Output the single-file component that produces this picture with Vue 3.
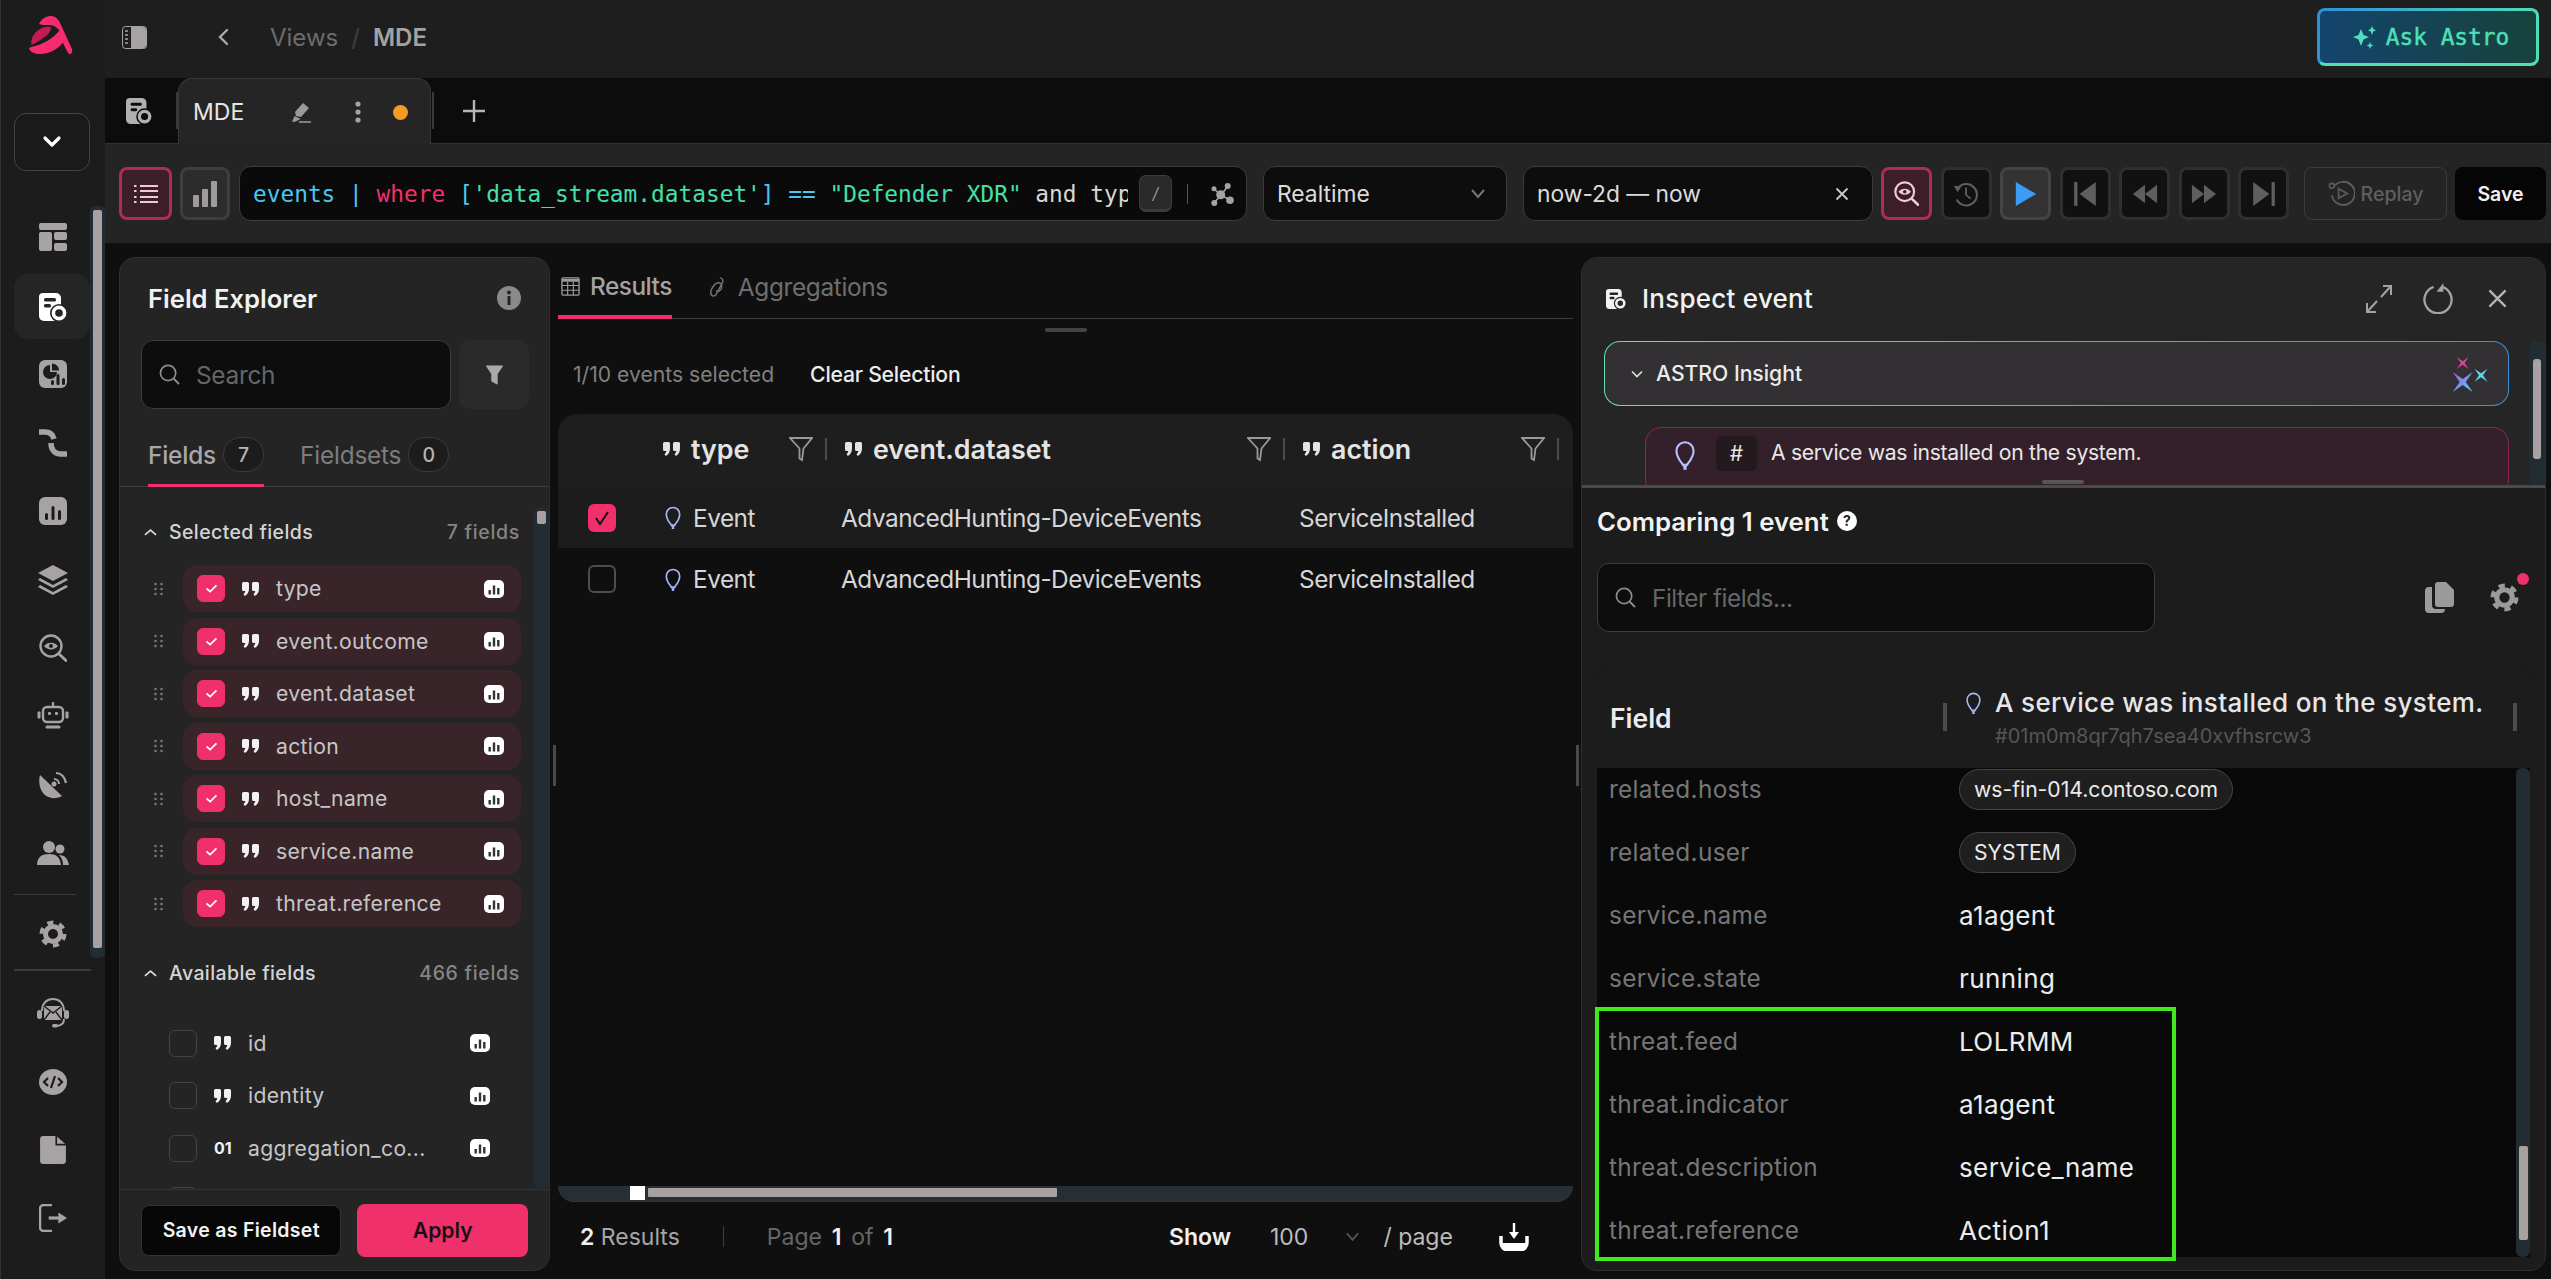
<script setup>
const navTop = [
  { id: 'n-layout' }, { id: 'n-doc', active: true }, { id: 'n-pie' }, { id: 'n-flow' }, { id: 'n-bars' },
  { id: 'n-layers', big: true }, { id: 'n-eye' }, { id: 'n-robot', big: true }, { id: 'n-dish' }, { id: 'n-users', big: true },
]
const navBottom = [
  { id: 'n-mail', big: true }, { id: 'n-code' }, { id: 'n-file' }, { id: 'n-logout' },
]
const selected = ['type', 'event.outcome', 'event.dataset', 'action', 'host_name', 'service.name', 'threat.reference']
const available = [
  { name: 'id', kind: 'q' }, { name: 'identity', kind: 'q' }, { name: 'aggregation_co...', kind: 'n' }, { name: '', kind: 'none' },
]
const columns = ['type', 'event.dataset', 'action']
const events = [
  { checked: true, dataset: 'AdvancedHunting-DeviceEvents', action: 'ServiceInstalled' },
  { checked: false, dataset: 'AdvancedHunting-DeviceEvents', action: 'ServiceInstalled' },
]
const playback = ['p-history', 'p-play', 'p-first', 'p-rew', 'p-ff', 'p-last']
const compare = [
  { f: 'related.hosts', v: 'ws-fin-014.contoso.com', tag: true },
  { f: 'related.user', v: 'SYSTEM', tag: true },
  { f: 'service.name', v: 'a1agent' },
  { f: 'service.state', v: 'running' },
  { f: 'threat.feed', v: 'LOLRMM' },
  { f: 'threat.indicator', v: 'a1agent' },
  { f: 'threat.description', v: 'service_name' },
  { f: 'threat.reference', v: 'Action1' },
]
</script>

<template>
  <div class="app">
    <svg class="defs" width="0" height="0" aria-hidden="true">
      <defs>
        <symbol id="n-layout" viewBox="0 0 28 28"><rect x="0" y="0" width="28" height="7" rx="2" fill="currentColor"/><rect x="0" y="9" width="13" height="19" rx="2" fill="currentColor"/><rect x="15" y="9" width="13" height="8" rx="2" fill="currentColor"/><rect x="15" y="20" width="13" height="8" rx="2" fill="currentColor"/></symbol>
        <symbol id="n-doc" viewBox="0 0 28 28"><path d="M4 0h13a5 5 0 0 1 5 5v23H5a5 5 0 0 1-5-5V4a4 4 0 0 1 4-4z" fill="currentColor"/><rect x="5" y="5" width="12" height="3.4" rx="1.5" fill="var(--cut)"/><rect x="5" y="11" width="7" height="3.4" rx="1.5" fill="var(--cut)"/><circle cx="20" cy="20" r="9" fill="var(--cut)"/><circle cx="20" cy="20" r="5.6" fill="none" stroke="currentColor" stroke-width="3.6"/></symbol>
        <symbol id="n-pie" viewBox="0 0 28 28"><rect width="28" height="28" rx="6" fill="currentColor"/><path d="M11 5a7 7 0 1 0 7 7h-7z" fill="var(--cut)"/><path d="M13 3.500a7 7 0 0 1 7 7h-7z" fill="var(--cut)"/><rect x="12" y="20" width="3" height="5" rx="1.500" fill="var(--cut)"/><rect x="17.500" y="14" width="3" height="11" rx="1.500" fill="var(--cut)"/><rect x="23" y="18" width="3" height="7" rx="1.500" fill="var(--cut)"/></symbol>
        <symbol id="n-flow" viewBox="0 0 28 28"><path d="M0 3h6c6 0 8 3 9 7" fill="none" stroke="currentColor" stroke-width="5.500"/><path d="M12 14c0 6 3 10.500 9 11h7" fill="none" stroke="currentColor" stroke-width="5.500"/></symbol>
        <symbol id="n-bars" viewBox="0 0 28 28"><rect width="28" height="28" rx="6" fill="currentColor"/><rect x="6" y="16" width="3" height="7" rx="1.500" fill="var(--cut)"/><rect x="12.500" y="9" width="3" height="14" rx="1.500" fill="var(--cut)"/><rect x="19" y="13" width="3" height="10" rx="1.500" fill="var(--cut)"/></symbol>
        <symbol id="n-layers" viewBox="0 0 32 32"><path d="M16 1l15 8-15 8-15-8z" fill="currentColor"/><path d="M3 14l13 7 13-7 2 2-15 8-15-8z" fill="currentColor"/><path d="M3 21l13 7 13-7 2 2-15 8-15-8z" fill="currentColor"/></symbol>
        <symbol id="n-eye" viewBox="0 0 28 28"><circle cx="12" cy="12" r="10.500" fill="none" stroke="currentColor" stroke-width="2.400"/><path d="M5 12c3.500-4.500 10.500-4.500 14 0-3.500 4.500-10.500 4.500-14 0z" fill="currentColor"/><circle cx="12" cy="12" r="2" fill="var(--cut)"/><path d="M20 20l7 6.500" stroke="currentColor" stroke-width="3" stroke-linecap="round"/></symbol>
        <symbol id="n-robot" viewBox="0 0 32 28"><path d="M16 0v5" stroke="currentColor" stroke-width="2.200"/><rect x="6" y="5" width="20" height="15" rx="4" fill="none" stroke="currentColor" stroke-width="2.400"/><rect x="11" y="10" width="3" height="3" rx="1" fill="currentColor"/><rect x="18" y="10" width="3" height="3" rx="1" fill="currentColor"/><path d="M1 10h2v6H1zM29 10h2v6h-2z" fill="currentColor" stroke="currentColor"/><path d="M10 25h12" stroke="currentColor" stroke-width="3" stroke-linecap="round"/></symbol>
        <symbol id="n-dish" viewBox="0 0 28 28"><path d="M1 4l22 21c-5 3-12 3-17-1C1 20-1 11 1 4z" fill="currentColor"/><path d="M15 8a5 5 0 0 1 5 5" fill="none" stroke="currentColor" stroke-width="2.200"/><path d="M17 2c5 0 9 4 10 10" fill="none" stroke="currentColor" stroke-width="2.200"/><circle cx="15" cy="13" r="2.500" fill="currentColor"/></symbol>
        <symbol id="n-users" viewBox="0 0 32 24"><circle cx="12" cy="6" r="6" fill="currentColor"/><path d="M0 24c0-8 5-11 12-11s11 3 12 11z" fill="currentColor"/><circle cx="23" cy="8" r="4.500" fill="currentColor"/><path d="M22 14c6 0 9 4 10 10h-6c0-4-1-7-4-10z" fill="currentColor"/></symbol>
        <symbol id="n-gear" viewBox="0 0 28 28"><circle cx="14" cy="14" r="7.500" fill="none" stroke="currentColor" stroke-width="5"/><circle cx="14" cy="14" r="11.500" fill="none" stroke="currentColor" stroke-width="4" stroke-dasharray="6 6.040"/></symbol>
        <symbol id="n-mail" viewBox="0 0 32 30"><path d="M5 13C5 5 10 1 16 1s11 4 11 12" fill="none" stroke="currentColor" stroke-width="2"/><rect x="0" y="12" width="5" height="9" rx="2.500" fill="currentColor"/><rect x="27" y="12" width="5" height="9" rx="2.500" fill="currentColor"/><rect x="7" y="8" width="18" height="14" fill="currentColor"/><path d="M7 8l9 7 9-7M7 22l6-8M25 22l-6-8" fill="none" stroke="var(--cut)" stroke-width="1.400"/><path d="M27 21c0 5-3 7-9 7" fill="none" stroke="currentColor" stroke-width="2"/><rect x="15" y="26" width="6" height="3.500" rx="1.700" fill="currentColor"/></symbol>
        <symbol id="n-code" viewBox="0 0 28 26"><ellipse cx="14" cy="13" rx="14" ry="13" fill="currentColor"/><path d="M9 9l-4 4 4 4M19 9l4 4-4 4M16 7l-4 12" fill="none" stroke="var(--cut)" stroke-width="2.200"/></symbol>
        <symbol id="n-file" viewBox="0 0 24 26"><path d="M3 0h12l9 8v15a3 3 0 0 1-3 3H3a3 3 0 0 1-3-3V3a3 3 0 0 1 3-3z" fill="currentColor"/><path d="M15 0v8h9" fill="none" stroke="var(--cut)" stroke-width="1.500"/></symbol>
        <symbol id="n-logout" viewBox="0 0 26 26"><path d="M12 1H4a3 3 0 0 0-3 3v18a3 3 0 0 0 3 3h8" fill="none" stroke="currentColor" stroke-width="2.200"/><path d="M9 13h10" stroke="currentColor" stroke-width="3"/><path d="M18 8l8 5-8 5z" fill="currentColor"/></symbol>
        <symbol id="quote" viewBox="0 0 18 14"><path d="M0 1.500A1.500 1.500 0 0 1 1.500 0h4A1.500 1.500 0 0 1 7 1.500v5C7 10 5.500 12.500 2.800 14L1.500 12c1-.7 1.600-1.500 1.800-3H1.500A1.500 1.500 0 0 1 0 7.500z" fill="currentColor"/><path d="M10 1.500A1.500 1.500 0 0 1 11.500 0h4A1.500 1.500 0 0 1 17 1.500v5c0 3.500-1.500 6-4.200 7.500L11.500 12c1-.7 1.600-1.500 1.800-3h-1.800A1.500 1.500 0 0 1 10 7.500z" fill="currentColor"/></symbol>
        <symbol id="mini" viewBox="0 0 20 18"><rect width="20" height="18" rx="5" fill="#fff"/><rect x="4.500" y="10" width="2.400" height="4.500" fill="#333"/><rect x="8.800" y="5.500" width="2.400" height="9" fill="#333"/><rect x="13.100" y="8" width="2.400" height="6.500" fill="#333"/></symbol>
        <symbol id="bulb" viewBox="0 0 18 30"><path d="M9 28c0-4-8-8-8-17a8 8 0 0 1 16 0c0 9-8 13-8 17z" fill="none" stroke="currentColor" stroke-width="2"/><path d="M6 24h6M7.500 28h3" stroke="currentColor" stroke-width="1.600"/></symbol>
        <symbol id="funnel" viewBox="0 0 24 24"><path d="M1 1h22l-8.500 10.500L13 23l-2.500-1.500V11.500z" fill="none" stroke="currentColor" stroke-width="1.800"/></symbol>
        <symbol id="search" viewBox="0 0 22 22"><circle cx="9.500" cy="9.500" r="8" fill="none" stroke="currentColor" stroke-width="1.800"/><path d="M15.500 15.500l5.500 5.500" stroke="currentColor" stroke-width="2"/></symbol>
        <symbol id="p-history" viewBox="0 0 28 28"><path d="M5 8A11.500 11.500 0 1 1 4 20" fill="none" stroke="currentColor" stroke-width="2.200"/><path d="M1 5l8 1-4 6z" fill="currentColor"/><path d="M14 7v8l5 4" fill="none" stroke="currentColor" stroke-width="2"/></symbol>
        <symbol id="p-play" viewBox="0 0 26 28"><path d="M2 1l22 13L2 27z" fill="#3b9bf5"/></symbol>
        <symbol id="p-first" viewBox="0 0 24 24"><rect x="2" y="1" width="3" height="22" fill="currentColor"/><path d="M22 1v22L7 12z" fill="currentColor"/></symbol>
        <symbol id="p-rew" viewBox="0 0 28 24"><path d="M14 2v20L1 12zM27 2v20L14 12z" fill="currentColor"/></symbol>
        <symbol id="p-ff" viewBox="0 0 28 24"><path d="M1 2v20l13-10zM14 2v20l13-10z" fill="currentColor"/></symbol>
        <symbol id="p-last" viewBox="0 0 24 24"><path d="M2 1v22l15-11z" fill="currentColor"/><rect x="19" y="1" width="3" height="22" fill="currentColor"/></symbol>
      </defs>
    </svg>

    <aside class="sidebar">
      <div class="logo-wrap">
        <svg class="logo" viewBox="0 0 70 56">
          <path d="M24 16C27 10 32 8 36 8c5 0 8 4 10 9l11 24c1 3-1 6-3 5-2-3-5-8-7-14l-3-10c-3-4-7-5-11-5-3 0-7 0-9-1z" fill="#f72c6f"/>
          <path d="M16.500 37C15 28 23 19 34 18.500c4 .5 1 6.500-3 9.500-5 4-10 7-14.500 9z" fill="#c21c58"/>
          <path d="M14 40c4-2 9-2 14-5 7-3 13-8 17-13l5 10c-5 8-15 14-25 14-5 0-10-2-11-6z" fill="#f72c6f"/>
        </svg>
      </div>
      <button class="collapse"><svg viewBox="0 0 20 14" width="20" height="14"><path d="M3 3l7 7 7-7" fill="none" stroke="#fff" stroke-width="3.200" stroke-linecap="round" stroke-linejoin="round"/></svg></button>
      <nav class="nav">
        <div v-for="n in navTop" :key="n.id" class="nav-item" :class="{ active: n.active }">
          <svg class="nav-icon" :class="{ big: n.big }"><use :href="'#' + n.id"/></svg>
        </div>
      </nav>
      <div class="rule short"></div>
      <div class="nav-item gear"><svg class="nav-icon"><use href="#n-gear"/></svg></div>
      <div class="rule"></div>
      <nav class="nav lower">
        <div v-for="n in navBottom" :key="n.id" class="nav-item"><svg class="nav-icon" :class="{ big: n.big }"><use :href="'#' + n.id"/></svg></div>
      </nav>
      <div class="side-scroll"><div class="side-thumb"></div></div>
    </aside>

    <div class="main">
      <header class="topbar">
        <svg class="panel-ico" viewBox="0 0 25 23"><rect x=".5" y=".5" width="24" height="22" rx="3" fill="none" stroke="#a7a3a5"/><path d="M9 1h12a3 3 0 0 1 3 3v15a3 3 0 0 1-3 3H9z" fill="#a7a3a5"/><path d="M3 5h3M3 9h3M3 13h3M3 17h3" stroke="#a7a3a5" stroke-width="1.500"/></svg>
        <svg class="back" viewBox="0 0 12 18"><path d="M10 2L3 9l7 7" fill="none" stroke="#a9a9a9" stroke-width="2.400" stroke-linecap="round"/></svg>
        <span class="crumb">Views</span><span class="crumb-sep">/</span><span class="crumb cur">MDE</span>
        <button class="ask">
          <svg viewBox="0 0 26 28" width="26" height="28"><path d="M9 6l2.500 6L17 14l-5.500 2.500L9 23l-2.500-6.500L1 14l5.500-2z" fill="#4ee0b8"/><path d="M20 3l1.300 3L24 7.300 21.300 8.600 20 12l-1.300-3.400L16 7.300l2.700-1.300zM18 19l1 2.500 2.500 1-2.500 1L18 26l-1-2.500-2.500-1 2.500-1z" fill="#4ee0b8"/></svg>
          <span>Ask Astro</span>
        </button>
      </header>

      <div class="tabbar">
        <svg class="tab-ico"><use href="#n-doc"/></svg>
        <span class="tab-sep"></span>
        <div class="tab">
          <span class="tab-name">MDE</span>
          <svg class="pen" viewBox="0 0 20 22"><path d="M11 2l6 5-8 9-5-1-1-4z" fill="#9a9a9a"/><path d="M3 16l4 2-4 2H1zM7 21h12" stroke="#9a9a9a" stroke-width="1.400" fill="#9a9a9a"/></svg>
          <svg class="dots" viewBox="0 0 6 22"><circle cx="3" cy="3" r="2.600" fill="#a3a3a3"/><circle cx="3" cy="11" r="2.600" fill="#a3a3a3"/><circle cx="3" cy="19" r="2.600" fill="#a3a3a3"/></svg>
          <span class="orange"></span>
        </div>
        <span class="tab-sep two"></span>
        <svg class="plus" viewBox="0 0 22 22"><path d="M11 0v22M0 11h22" stroke="#b5b5b5" stroke-width="2.400"/></svg>
      </div>

      <div class="toolbar">
        <button class="tool list"><svg viewBox="0 0 24 22" width="24" height="22"><path d="M6 3h18M6 8h18M6 14h18M6 19h18" stroke="#f5c6d6" stroke-width="1.800"/><path d="M0 3h2.500M0 8h2.500M0 14h2.500M0 19h2.500" stroke="#f5c6d6" stroke-width="2.200"/></svg></button>
        <button class="tool chart"><svg viewBox="0 0 24 26" width="24" height="26"><rect x="0" y="14" width="6" height="12" rx="1" fill="#9f9a9c"/><rect x="9" y="8" width="6" height="18" rx="1" fill="#9f9a9c"/><rect x="18" y="0" width="6" height="26" rx="1" fill="#9f9a9c"/></svg></button>
        <div class="query">
          <code class="q-text"><span class="b">events | </span><span class="p">where</span><span class="b"> [</span><span class="g">'data_stream.dataset'</span><span class="b">] == </span><span class="g">"Defender XDR"</span><span class="w"> and typ</span></code>
          <kbd class="slash">/</kbd>
          <span class="q-sep"></span>
          <svg class="graph" viewBox="12 8 28 28"><path d="M19 17l7 6M33 14l-7 9M19 31l7-8M35 28l-9-5" stroke="#a3a3a3" stroke-width="1.600"/><circle cx="19" cy="16.700" r="2.500" fill="#a3a3a3"/><circle cx="32.700" cy="14" r="3" fill="#a3a3a3"/><circle cx="19.300" cy="31" r="3" fill="#a3a3a3"/><circle cx="35" cy="28.300" r="3.800" fill="#a3a3a3"/><circle cx="25.700" cy="22.700" r="4.500" fill="#a3a3a3"/></svg>
        </div>
        <div class="select">
          <span>Realtime</span>
          <svg viewBox="0 0 16 10" width="16" height="10"><path d="M2 1l6 7 6-7" fill="none" stroke="#777" stroke-width="2"/></svg>
        </div>
        <div class="select time">
          <span>now-2d — now</span>
          <svg viewBox="0 0 14 14" width="14" height="14"><path d="M1.500 1.500l11 11M12.500 1.500l-11 11" stroke="#c9c9c9" stroke-width="1.800"/></svg>
        </div>
        <div class="play-group">
          <button class="tool sq pink"><svg viewBox="0 0 28 28" width="25" height="25"><use href="#n-eye" style="color:#f7c8d8;--cut:#3a1f2b"/></svg></button>
          <button v-for="p in playback" :key="p" class="tool sq" :class="{ run: p === 'p-play' }">
            <svg width="26" height="26"><use :href="'#' + p"/></svg>
          </button>
        </div>
        <button class="replay">
          <svg viewBox="0 0 28 28" width="27" height="27"><path d="M6 7a12 12 0 1 1-2 9" fill="none" stroke="#5c5c5c" stroke-width="2"/><circle cx="4" cy="6" r="2.500" fill="none" stroke="#5c5c5c" stroke-width="1.600"/><path d="M11 9l9 5-9 5z" fill="none" stroke="#5c5c5c" stroke-width="1.800"/></svg>
          <span>Replay</span>
        </button>
        <button class="save">Save</button>
      </div>

      <div class="workspace">
        <section class="explorer">
          <div class="ex-head"><h2>Field Explorer</h2>
            <svg viewBox="0 0 24 24" width="24" height="24"><circle cx="12" cy="12" r="12" fill="#8a8a8a"/><rect x="10.500" y="10" width="3" height="9" fill="#242424"/><circle cx="12" cy="6.500" r="1.900" fill="#242424"/></svg>
          </div>
          <div class="ex-search">
            <div class="inp"><svg width="21" height="21"><use href="#search"/></svg><span>Search</span></div>
            <button class="filter-btn"><svg viewBox="0 0 20 22" width="19" height="20"><path d="M1 1h18l-6 9v11l-6-3v-8z" fill="#a9a9a9" stroke="#a9a9a9" stroke-linejoin="round"/></svg></button>
          </div>
          <div class="ex-tabs">
            <div class="ex-tab on"><span>Fields</span><b>7</b></div>
            <div class="ex-tab"><span>Fieldsets</span><b>0</b></div>
          </div>
          <div class="ex-list">
            <div class="sec first"><svg viewBox="0 0 14 8" width="13" height="8"><path d="M1 7l6-5 6 5" fill="none" stroke="#ddd" stroke-width="1.800"/></svg><span class="sec-name">Selected fields</span><span class="sec-count">7 fields</span></div>
            <div class="sel-rows">
              <div v-for="f in selected" :key="f" class="sel-row">
                <svg class="drag" viewBox="0 0 10 14"><g fill="#777"><circle cx="1.500" cy="2" r="1.300"/><circle cx="7.500" cy="2" r="1.300"/><circle cx="1.500" cy="7" r="1.300"/><circle cx="7.500" cy="7" r="1.300"/><circle cx="1.500" cy="12" r="1.300"/><circle cx="7.500" cy="12" r="1.300"/></g></svg>
                <div class="sel-pill">
                  <span class="chk on"><svg viewBox="0 0 14 10" width="13" height="9"><path d="M1.500 5l4 3.500 7-7" fill="none" stroke="#fff" stroke-width="1.900"/></svg></span>
                  <svg class="qt"><use href="#quote"/></svg>
                  <span class="fname">{{ f }}</span>
                  <svg class="mini"><use href="#mini"/></svg>
                </div>
              </div>
            </div>
            <div class="sec"><svg viewBox="0 0 14 8" width="13" height="8"><path d="M1 7l6-5 6 5" fill="none" stroke="#ddd" stroke-width="1.800"/></svg><span class="sec-name">Available fields</span><span class="sec-count">466 fields</span></div>
            <div class="av-rows">
              <div v-for="f in available" :key="f.kind + f.name" class="av-row">
                <span class="chk"></span>
                <template v-if="f.kind !== 'none'">
                  <svg v-if="f.kind === 'q'" class="qt"><use href="#quote"/></svg>
                  <span v-else class="num">01</span>
                  <span class="fname">{{ f.name }}</span>
                  <svg class="mini"><use href="#mini"/></svg>
                </template>
              </div>
            </div>
            <div class="ex-scroll"><div class="ex-thumb"></div></div>
          </div>
          <div class="ex-foot">
            <button class="fs-btn">Save as Fieldset</button>
            <button class="apply">Apply</button>
          </div>
        </section>

        <div class="gutter"><i></i></div>

        <section class="results">
          <div class="res-tabs">
            <div class="res-tab on">
              <svg viewBox="0 0 20 20" width="19" height="19"><rect x="1" y="1" width="18" height="18" rx="1" fill="none" stroke="#9b9b9b" stroke-width="1.400"/><path d="M1 3.500h18" stroke="#9b9b9b" stroke-width="3"/><path d="M1 9h18M1 14h18M7 5v14M13 5v14" stroke="#9b9b9b" stroke-width="1.200"/></svg>
              <span>Results</span>
            </div>
            <div class="res-tab">
              <svg viewBox="0 0 20 24" width="20" height="22"><path d="M12 2c3 0 4 3 3 5L8 20c-2 3-6 2-6-2 0-3 3-8 6-10 4-2 7 1 6 5-1 3-4 5-6 3" fill="none" stroke="#777" stroke-width="1.500"/></svg>
              <span>Aggregations</span>
            </div>
          </div>
          <div class="handle-row"><i></i></div>
          <div class="sel-info"><span class="muted">1/10 events selected</span><span class="clear">Clear Selection</span></div>
          <div class="grid-head">
            <div></div>
            <div v-for="c in columns" :key="c" class="th">
              <svg class="qt-h"><use href="#quote"/></svg>
              <span class="th-name">{{ c }}</span>
              <svg class="th-filter"><use href="#funnel"/></svg>
              <span class="th-sep"></span>
            </div>
          </div>
          <div v-for="(e, i) in events" :key="i" class="grid-row" :class="{ sel: e.checked }">
            <div class="cb-cell"><span class="cb" :class="{ on: e.checked }"><svg v-if="e.checked" viewBox="0 0 18 16" width="18" height="16"><path d="M3 8l4 6 8-12" fill="none" stroke="#1a1013" stroke-width="2"/></svg></span></div>
            <div class="td first-td"><svg class="bulb"><use href="#bulb"/></svg>Event</div>
            <div class="td">{{ e.dataset }}</div>
            <div class="td">{{ e.action }}</div>
          </div>
          <div class="spacer"></div>
          <div class="hscroll"><i class="marker"></i><i class="hthumb"></i></div>
          <div class="res-foot">
            <span><b>2</b> Results</span>
            <span class="foot-sep"></span>
            <span class="pg">Page <b>1</b> of <b>1</b></span>
            <b class="show">Show</b>
            <span class="hundred">100</span>
            <svg viewBox="0 0 16 10" width="15" height="10"><path d="M2 1l6 7 6-7" fill="none" stroke="#555" stroke-width="2"/></svg>
            <span class="per">/ page</span>
            <svg class="dl" viewBox="0 0 30 28" width="30" height="28"><path d="M15 0v13" stroke="#fff" stroke-width="2.400"/><path d="M10 9l5 7 5-7z" fill="#fff"/><path d="M2 13v7a7 7 0 0 0 7 7h12a7 7 0 0 0 7-7v-7" fill="none" stroke="#fff" stroke-width="3.500"/><path d="M2 20h26v2a5 5 0 0 1-5 5H7a5 5 0 0 1-5-5z" fill="#fff"/></svg>
          </div>
        </section>

        <div class="gutter"><i></i></div>

        <section class="inspect">
          <div class="ins-top">
            <div class="ins-head">
              <svg class="ins-doc"><use href="#n-doc"/></svg>
              <h2>Inspect event</h2>
              <svg class="expand" viewBox="0 0 26 28" width="26" height="28"><path d="M15 12L25 1M11 16L1 27M17 1h8v9M1 18v9h9" fill="none" stroke="#a3a3a3" stroke-width="2"/></svg>
              <svg class="reset" viewBox="0 0 32 32" width="31" height="31"><path d="M20 4a14 14 0 1 1-9 0" fill="none" stroke="#a3a3a3" stroke-width="2.400"/><path d="M21 0v9h-7z" fill="#a3a3a3"/></svg>
              <svg class="close" viewBox="0 0 20 20" width="19" height="19"><path d="M1.500 1.500l17 17M18.500 1.500l-17 17" stroke="#b5b5b5" stroke-width="2.400"/></svg>
            </div>
            <div class="insight">
              <svg viewBox="0 0 12 8" width="12" height="8"><path d="M1 1.500l5 5 5-5" fill="none" stroke="#ddd" stroke-width="1.700"/></svg>
              <span>ASTRO Insight</span>
              <svg class="spark" viewBox="0 0 60 54" width="60" height="54">
                <defs><linearGradient id="sg" x1="0" y1="0" x2="1" y2="1"><stop offset="0" stop-color="#a64df0"/><stop offset="1" stop-color="#4fd8ee"/></linearGradient></defs>
                <polygon points="16.700,10 22.700,14.200 28.700,10 24.500,16 28.700,22 22.700,17.800 16.700,22 20.900,16" fill="#e6409c"/>
                <polygon points="12.700,25 22.700,32 32.700,25 25.700,35 32.700,45 22.700,38 12.700,45 19.700,35" fill="url(#sg)"/>
                <polygon points="34.500,21.800 41,26.300 47.500,21.800 43,28.300 47.500,34.800 41,30.300 34.500,34.800 39,28.300" fill="#5ad6ee"/>
              </svg>
            </div>
            <div class="ev-card">
              <svg class="bulb-b"><use href="#bulb"/></svg>
              <span class="hash">#</span>
              <span class="ev-text">A service was installed on the system.</span>
            </div>
            <div class="ins-scroll"><i></i></div>
          </div>
          <div class="split"><i></i></div>
          <div class="ins-bottom">
            <div class="cmp-title"><span>Comparing 1 event</span><svg viewBox="0 0 20 20" width="20" height="20"><circle cx="10" cy="10" r="10" fill="#fff"/><text x="10" y="15" text-anchor="middle" font-size="14" font-weight="700" font-family="Inter, sans-serif" fill="#1c1c1c">?</text></svg></div>
            <div class="cmp-tools">
              <div class="inp wide"><svg width="21" height="21"><use href="#search"/></svg><span>Filter fields...</span></div>
              <svg class="copy" viewBox="0 0 29 31" width="29" height="31"><path d="M13 0h8l8 8v14a3 3 0 0 1-3 3H13a3 3 0 0 1-3-3V3a3 3 0 0 1 3-3z" fill="#9b9b9b"/><path d="M7 5H4a4 4 0 0 0-4 4v18a4 4 0 0 0 4 4h12a4 4 0 0 0 4-4h-9a4 4 0 0 1-4-4z" fill="#9b9b9b"/></svg>
              <div class="gear-wrap"><svg class="cmp-gear"><use href="#n-gear"/></svg><i></i></div>
            </div>
            <div class="cmp-table">
              <div class="cmp-head">
                <span class="f-col">Field</span>
                <span class="cmp-sep"></span>
                <svg class="bulb-h"><use href="#bulb"/></svg>
                <div class="ev-title"><span>A service was installed on the system.</span><small>#01m0m8qr7qh7sea40xvfhsrcw3</small></div>
                <span class="cmp-sep end"></span>
              </div>
              <div class="cmp-body">
                <div class="cmp-rows">
                  <div v-for="r in compare" :key="r.f" class="cmp-row">
                    <span class="cf">{{ r.f }}</span>
                    <span :class="r.tag ? 'tag' : 'cv'">{{ r.v }}</span>
                  </div>
                </div>
                <div class="cmp-scroll"><i></i></div>
              </div>
            </div>
          </div>
        </section>
      </div>
    </div>
    <div class="highlight"></div>
  </div>
</template>

<style>
html, body { margin: 0; background: #0f0f10; }
</style>

<style scoped>
* { box-sizing: border-box; }
.defs { position: absolute; }
.app { --cut: #1c1c1c; position: relative; width: 2551px; height: 1279px; display: flex; overflow: hidden; background: #0f0f10; color: #e6e6e6; font-family: Inter, "Noto Sans", sans-serif; font-size: 24px; }
button { font-family: inherit; border: 0; padding: 0; }
h2 { margin: 0; font-weight: 600; }

.sidebar { position: relative; width: 105px; flex: none; background: #1c1c1c; border-left: 1px solid #333; display: flex; flex-direction: column; padding-left: 13px; }
.logo-wrap { height: 78px; flex: none; padding: 8px 0 0 1px; }
.logo { width: 70px; height: 56px; display: block; }
.collapse { width: 76px; height: 58px; flex: none; margin-top: 35px; background: #1a1a1a; border: 1px solid #444; border-radius: 12px; display: flex; align-items: center; justify-content: center; }
.nav { margin-top: 30px; width: 76px; display: flex; flex-direction: column; align-items: stretch; flex: none; }
.nav-item { height: 68.3px; flex: none; display: flex; align-items: center; justify-content: center; color: #a7a3a5; padding-left: 2px; }
.nav > .nav-item:first-child { height: 72px; }
.nav > .nav-item:nth-child(2) { height: 65px; margin-top: 1px; }
.nav > .nav-item:nth-child(3) { height: 70px; }
.nav-item.active { color: #fff; background: #252525; border-radius: 14px; --cut: #252525; }
.nav-icon { width: 28px; height: 28px; }
.nav-icon.big { width: 32px; height: 32px; }
.rule { height: 2px; width: 77px; background: #3c3c3c; flex: none; }
.rule.short { height: 1px; width: 62px; margin-top: 7px; }
.gear { width: 76px; height: 74px; padding-top: 3px; }
.nav.lower { margin-top: 8px; }
.nav.lower > .nav-item:first-child { height: 68.3px; }
.nav.lower > .nav-item:nth-child(2) { height: 68.3px; margin-top: 0; }
.nav.lower > .nav-item:nth-child(3) { height: 68.3px; }
.side-scroll { position: absolute; left: 89px; top: 206px; width: 15px; height: 752px; background: #212c33; border-radius: 5px; padding: 4px 3px 10px; }
.side-thumb { width: 9px; height: 100%; background: #a9a1a1; border-radius: 2px; }

.main { flex: 1; min-width: 0; display: flex; flex-direction: column; }
.topbar { height: 78px; flex: none; background: #1e1e1e; display: flex; align-items: center; padding: 0 12px 4px 17px; }
.panel-ico { width: 25px; height: 23px; margin-right: 70px; }
.back { width: 12px; height: 18px; margin-right: 41px; }
.crumb { font-size: 24px; color: #6c6c6c; }
.crumb-sep { margin: 0 13px; color: #3e3e3e; }
.crumb.cur { color: #a3a3a3; font-weight: 600; }
.ask { margin-left: auto; width: 222px; height: 58px; border-radius: 8px; border: 3px solid transparent; border-bottom-color: #4ee0b8; background: linear-gradient(90deg, #13456d, #17423a) padding-box, linear-gradient(100deg, #2f8fd8, #4ee0b8) border-box; display: flex; align-items: center; justify-content: center; gap: 8px; font-family: "DejaVu Sans Mono", monospace; font-size: 22.800px; color: #4ee0b8; padding-left: 5px; -webkit-text-stroke: .4px #4ee0b8; }
.tabbar { height: 66px; flex: none; background: #0c0c0d; display: flex; align-items: center; padding-left: 21px; border-bottom: 1px solid #333; }
.tab-ico { width: 26px; height: 26px; color: #b0b0b0; --cut: #0c0c0d; }
.tab-sep { width: 2px; height: 37px; background: #3a3a3a; margin-left: 24px; }
.tab-sep.two { margin-left: 1px; }
.tab { width: 253px; height: 67px; align-self: flex-start; background: #252525; border: 1px solid #383838; border-bottom: 0; border-radius: 14px 14px 0 0; display: flex; align-items: center; padding-left: 14px; color: #e6e6e6; }
.tab-name { font-size: 23px; width: 99px; }
.pen { width: 20px; height: 22px; }
.dots { width: 6px; height: 22px; margin-left: 43px; }
.orange { width: 15px; height: 15px; border-radius: 50%; background: #f59a23; margin-left: 32px; }
.plus { width: 22px; height: 22px; margin-left: 29px; }

.toolbar { height: 99px; flex: none; background: #242424; display: flex; align-items: center; padding-left: 14px; }
.tool { height: 53px; background: #111; border: 3px solid #2f2f2f; border-radius: 8px; display: flex; align-items: center; justify-content: center; color: #5f5f5f; }
.tool.list { width: 53px; background: #3a1f2b; border-color: #b02a5a; margin-right: 8px; }
.tool.chart { width: 50px; background: #2c2c2c; border-color: #3e3e3e; margin-right: 9px; }
.query { width: 1008px; height: 55px; background: #0a0a0b; border: 1px solid #3c3c3c; border-radius: 12px; display: flex; align-items: center; padding-left: 13px; margin-right: 16px; }
.q-text { font-family: "DejaVu Sans Mono", monospace; font-size: 22.800px; line-height: 40px; width: 875px; flex: none; overflow: hidden; white-space: pre; }
.b { color: #4cc6ee; } .p { color: #f0306a; } .g { color: #45e0a6; } .w { color: #d8d8d8; }
.slash { width: 33px; height: 37px; margin-left: 11px; background: #2a2a2a; border: 1px solid #3c3c3c; border-bottom-width: 3px; border-radius: 7px; display: flex; align-items: center; justify-content: center; font-size: 16px; color: #999; font-style: italic; font-family: Inter, sans-serif; }
.q-sep { width: 1px; height: 20px; background: #555; margin-left: 15px; }
.graph { width: 28px; height: 28px; margin-left: 19px; }
.select { width: 244px; height: 55px; background: #0d0d0e; border: 1px solid #3c3c3c; border-radius: 12px; display: flex; align-items: center; justify-content: space-between; padding: 0 20px 0 13px; margin-right: 16px; font-size: 22.800px; color: #dcdcdc; flex: none; }
.select.time { width: 350px; margin-right: 8px; padding-right: 23px; }
.play-group { display: flex; gap: 8.500px; }
.sq { width: 51px; }
.sq.pink { background: #3a1f2b; border-color: #b02a5a; }
.sq.run { background: #333; border-color: #444; }
.replay { width: 143px; height: 53px; margin-left: 15px; background: transparent; border: 1px solid #3c3c3c; border-radius: 8px; display: flex; align-items: center; justify-content: center; gap: 6px; color: #5f5f5f; font-size: 19.500px; font-weight: 500; }
.save { width: 91px; height: 53px; margin-left: 8px; background: #050505; border-radius: 8px; color: #f0f0f0; font-size: 19.500px; font-weight: 600; }

.workspace { flex: 1; min-height: 0; display: flex; padding: 14px 5px 8px 14px; }
.gutter { width: 8px; flex: none; display: flex; align-items: center; justify-content: center; padding-bottom: 485px; padding-top: 488px; }
.gutter i { width: 3px; height: 100%; background: #4a4a4a; }
.explorer { width: 431px; flex: none; background: #242424; border: 1px solid #2f2f2f; border-radius: 16px; display: flex; flex-direction: column; overflow: hidden; }
.ex-head { height: 82px; flex: none; display: flex; align-items: center; justify-content: space-between; padding: 0 28px 2px; }
.ex-head h2 { font-size: 25.600px; color: #f2f2f2; }
.ex-search { display: flex; gap: 8px; padding-left: 21px; height: 69px; flex: none; }
.inp { width: 310px; height: 69px; background: #0d0d0e; border: 1px solid #3c3c3c; border-radius: 12px; display: flex; align-items: center; gap: 16px; padding-left: 17px; color: #8c8c8c; font-size: 24.400px; letter-spacing: -.3px; }
.inp span { color: #666; }
.filter-btn { width: 70px; height: 69px; background: #2a2a2a; border-radius: 10px; display: flex; align-items: center; justify-content: center; }
.ex-tabs { height: 78px; flex: none; display: flex; align-items: flex-end; gap: 36px; padding-left: 28px; border-bottom: 1px solid #3c3c3c; }
.ex-tab { height: 62px; display: flex; align-items: center; gap: 7px; color: #7d7d7d; font-size: 24.400px; letter-spacing: -.2px; border-bottom: 3px solid transparent; margin-bottom: -1px; }
.ex-tab.on { color: #a8a8a8; font-weight: 500; border-bottom-color: #f0306a; }
.ex-tab b { height: 35px; min-width: 41px; padding: 0 13px; border: 1px solid #3c3c3c; border-radius: 18px; background: #1c1c1c; color: #b5b5b5; display: flex; align-items: center; justify-content: center; font-size: 19.500px; font-weight: 500; }
.ex-list { flex: 1; min-height: 0; position: relative; overflow: hidden; }
.sec { height: 28px; display: flex; align-items: center; margin-top: 32px; padding: 0 29px 0 24px; font-size: 19.500px; letter-spacing: .4px; }
.sec.first { margin-top: 31px; }
.sec-name { margin-left: 12px; color: #d4d4d4; font-weight: 500; }
.sec-count { margin-left: auto; color: #858585; font-weight: 500; letter-spacing: .7px; }
.sel-rows { margin-top: 19px; display: flex; flex-direction: column; gap: 5.500px; }
.sel-row { height: 47px; display: flex; align-items: center; padding-left: 34px; }
.drag { width: 10px; height: 14px; margin-right: 19px; }
.sel-pill { width: 338px; height: 47px; background: #392429; border-radius: 14px; display: flex; align-items: center; padding-left: 14px; }
.chk { width: 28px; height: 27px; border-radius: 6px; border: 1px solid #444; display: flex; align-items: center; justify-content: center; flex: none; }
.chk.on { background: #f0306a; border-color: #f0306a; }
.qt { width: 18px; height: 14px; color: #f2f2f2; margin-left: 17px; flex: none; }
.fname { margin-left: 16px; font-size: 21.150px; color: #c6c6c6; letter-spacing: .3px; white-space: nowrap; }
.mini { width: 20px; height: 18px; margin-left: auto; margin-right: 17px; flex: none; }
.av-rows { margin-top: 32px; display: flex; flex-direction: column; gap: 4.500px; }
.av-row { height: 48px; flex: none; display: flex; align-items: center; padding-left: 49px; padding-right: 42px; }
.num { width: 18px; margin-left: 17px; font-size: 16px; font-weight: 700; color: #f2f2f2; }
.ex-scroll { position: absolute; right: 0; top: 21px; bottom: 0; width: 15px; background: #212c33; border-radius: 5px; padding: 3px; }
.ex-thumb { width: 9px; height: 13px; background: #a9a1a1; border-radius: 2px; }
.ex-foot { height: 81px; flex: none; border-top: 1px solid #333; display: flex; align-items: center; gap: 16px; padding: 0 21px; }
.fs-btn { width: 201px; height: 51px; background: #070707; border: 1px solid #333; border-radius: 8px; color: #f2f2f2; font-size: 19.500px; font-weight: 600; letter-spacing: .3px; }
.apply { width: 171px; height: 53px; background: #f0306a; border-radius: 8px; color: #1a0f13; font-size: 21.150px; font-weight: 600; }

.results { width: 1015px; flex: none; display: flex; flex-direction: column; }
.res-tabs { height: 62px; flex: none; display: flex; align-items: flex-end; gap: 33px; border-bottom: 1px solid #3c3c3c; }
.res-tab { height: 62px; display: flex; align-items: center; gap: 10px; padding-left: 3px; font-size: 24.400px; letter-spacing: -.35px; color: #6e6e6e; margin-bottom: -1px; padding-bottom: 3px; }
.res-tab.on { color: #a3a3a3; font-weight: 500; letter-spacing: -.5px; border-bottom: 4px solid #f0306a; padding-bottom: 0; }
.handle-row { height: 22px; flex: none; display: flex; align-items: center; justify-content: center; }
.handle-row i { width: 42px; height: 4px; border-radius: 2px; background: #444; margin-left: 1px; }
.sel-info { height: 66px; flex: none; margin-bottom: 7px; display: flex; align-items: center; padding-left: 15px; gap: 36px; font-size: 21.150px; }
.muted { color: #808080; }
.clear { color: #ececec; font-weight: 500; letter-spacing: -.2px; }
.grid-head, .grid-row { display: grid; grid-template-columns: 105px 178px 458px 1fr; }
.grid-head { height: 73px; flex: none; background: #1e1e1e; border-radius: 20px 20px 0 0; }
.th { display: flex; align-items: center; padding: 0 14px 3px 4px; color: #e4e4e4; font-size: 26.800px; font-weight: 600; }
.th:nth-child(2) { padding-left: 0; }
.qt-h { width: 18px; height: 14px; color: #e4e4e4; margin-right: 10px; }
.th-filter { width: 24px; height: 26px; color: #9a9a9a; margin-left: auto; }
.th-sep { width: 2px; height: 22px; background: #4c4c4c; margin-left: 12px; }
.grid-row { align-items: center; font-size: 24.400px; letter-spacing: -.5px; color: #d6d6d6; height: 62px; flex: none; }
.grid-row.sel { height: 61px; background: #1c1c1c; }
.cb-cell { padding-left: 30px; display: flex; }
.cb { width: 28px; height: 28px; border-radius: 6px; border: 2px solid #4e4e4e; display: flex; align-items: center; justify-content: center; }
.cb.on { background: #f0306a; border-color: #f0306a; }
.first-td { display: flex; align-items: center; gap: 11px; padding-left: 1px; }
.bulb { width: 18px; height: 25px; color: #a9b4f5; }
.spacer { flex: 1; }
.hscroll { height: 16px; flex: none; background: #262f36; border-radius: 0 0 16px 16px; border-bottom: 1px solid #333; position: relative; }
.marker { position: absolute; left: 72px; top: 0; width: 15px; height: 14px; background: #fff; }
.hthumb { position: absolute; left: 90px; top: 2px; width: 409px; height: 9px; background: #a9a1a1; border-radius: 1px; }
.res-foot { height: 69px; flex: none; display: flex; align-items: center; padding: 0 0 0 22px; font-size: 23px; color: #a6a6a6; }
.res-foot b { font-weight: 600; color: #f0f0f0; }
.foot-sep { width: 1px; height: 21px; background: #3c3c3c; margin: 0 43px; }
.pg { color: #666; word-spacing: 3.300px; }
.show { margin-left: 276px; }
.hundred { margin: 0 37px 0 39px; color: #bcbcbc; }
.per { margin-left: 23px; color: #bcbcbc; }
.dl { margin-left: 46px; }

.inspect { width: 965px; flex: none; border: 1px solid #2f2f2f; border-radius: 16px; overflow: hidden; display: flex; flex-direction: column; background: #1c1c1c; }
.ins-top { height: 227px; flex: none; position: relative; overflow: hidden; background: #252525; padding: 0 36px 0 22px; }
.ins-head { height: 83px; display: flex; align-items: center; padding-bottom: 2px; }
.ins-doc { width: 20px; height: 20px; color: #f2f2f2; --cut: #252525; margin: 0 0 0 2px; }
.ins-head h2 { margin-left: 16px; font-size: 26px; font-weight: 500; color: #f2f2f2; letter-spacing: .25px; }
.expand { margin-left: auto; }
.reset { margin-left: 31px; }
.close { margin-left: 34px; margin-right: 2px; }
.insight { height: 65px; border-radius: 16px; border: 1.500px solid transparent; background: linear-gradient(#323032, #323032) padding-box, linear-gradient(90deg, #62e0b0, #3f8fd8) border-box; display: flex; align-items: center; padding: 0 8px 0 26px; font-size: 21.150px; font-weight: 500; color: #ececec; gap: 13px; }
.spark { margin-left: auto; }
.ev-card { margin: 21px 0 0 41px; height: 70px; background: #34202a; border: 1.500px solid #8a2a4b; border-radius: 16px; display: flex; align-items: flex-start; padding: 8px 0 0 28px; font-size: 21.150px; color: #e8e8e8; }
.ev-text { margin-top: 4px; letter-spacing: -.3px; }
.bulb-b { width: 22px; height: 32px; color: #b7c1ff; margin-top: 3px; }
.hash { width: 41px; height: 35px; margin-left: 20px; margin-right: 14px; background: #241a1e; border-radius: 5px; display: flex; align-items: center; justify-content: center; }
.ins-scroll { position: absolute; right: 0; top: 83px; bottom: 0; width: 16px; background: #212c33; border-radius: 5px; padding: 18px 4px 0; }
.ins-scroll i { display: block; width: 8px; height: 100px; background: #a9a1a1; border-radius: 3px; }
.split { height: 3px; flex: none; background: #4a4a4a; position: relative; }
.split i { position: absolute; left: 460px; top: -5px; width: 42px; height: 4px; background: #555; border-radius: 2px; }
.ins-bottom { flex: 1; min-height: 0; display: flex; flex-direction: column; padding: 0 15px 13px; }
.cmp-title { height: 75px; flex: none; display: flex; align-items: center; gap: 8px; font-size: 25.800px; font-weight: 600; color: #f2f2f2; padding-bottom: 9px; }
.cmp-tools { height: 69px; flex: none; display: flex; align-items: center; }
.inp.wide { width: 558px; gap: 16px; letter-spacing: -.5px; }
.copy { margin-left: 270px; }
.gear-wrap { position: relative; margin-left: 36px; width: 29px; height: 29px; }
.cmp-gear { width: 29px; height: 29px; color: #9b9b9b; }
.gear-wrap i { position: absolute; right: -10px; top: -10px; width: 12px; height: 12px; border-radius: 50%; background: #f0306a; }
.cmp-table { flex: 1; min-height: 0; margin-top: 36px; background: #090909; display: flex; flex-direction: column; border-radius: 10px 10px 0 0; }
.cmp-head { height: 100px; flex: none; background: #1c1c1c; border-radius: 10px 10px 0 0; display: flex; align-items: flex-start; }
.f-col { width: 346px; padding: 34px 0 0 13px; font-size: 26.500px; font-weight: 600; color: #ececec; }
.cmp-sep { width: 4px; height: 28px; margin-top: 35px; background: #4c4c4c; flex: none; }
.cmp-sep.end { margin-left: 30px; }
.bulb-h { width: 17px; height: 24px; color: #a9b4f5; margin: 23px 13px 0 18px; flex: none; }
.ev-title { display: flex; flex-direction: column; padding-top: 19px; font-size: 26px; color: #e6e6e6; letter-spacing: .35px; font-weight: 500; white-space: nowrap; }
.ev-title small { font-size: 20px; color: #565656; margin-top: 6px; letter-spacing: 0; font-weight: 400; }
.cmp-body { flex: 1; min-height: 0; position: relative; overflow: hidden; }
.cmp-rows { margin-top: -10.500px; }
.cmp-row { height: 63px; display: flex; align-items: center; }
.cf { width: 350px; padding-left: 12px; flex: none; font-size: 24.400px; letter-spacing: .3px; color: #767676; }
.cv { margin-left: 12px; font-size: 26px; letter-spacing: .4px; color: #ececec; }
.tag { margin-left: 12px; height: 41px; padding: 0 14px; background: #1f1f1f; border: 1px solid #444; border-radius: 21px; display: flex; align-items: center; font-size: 21.150px; font-weight: 400; color: #ececec; }
.cmp-scroll { position: absolute; right: 0; top: 0; bottom: 0; width: 14px; background: #212c33; border-radius: 6px; padding-top: 378px; padding-left: 3px; }
.cmp-scroll i { display: block; width: 9px; height: 94px; background: #a9a1a1; border-radius: 2px; }
.highlight { position: absolute; left: 1595px; top: 1007px; width: 581px; height: 254px; border: 4px solid #3fe81f; }
</style>
